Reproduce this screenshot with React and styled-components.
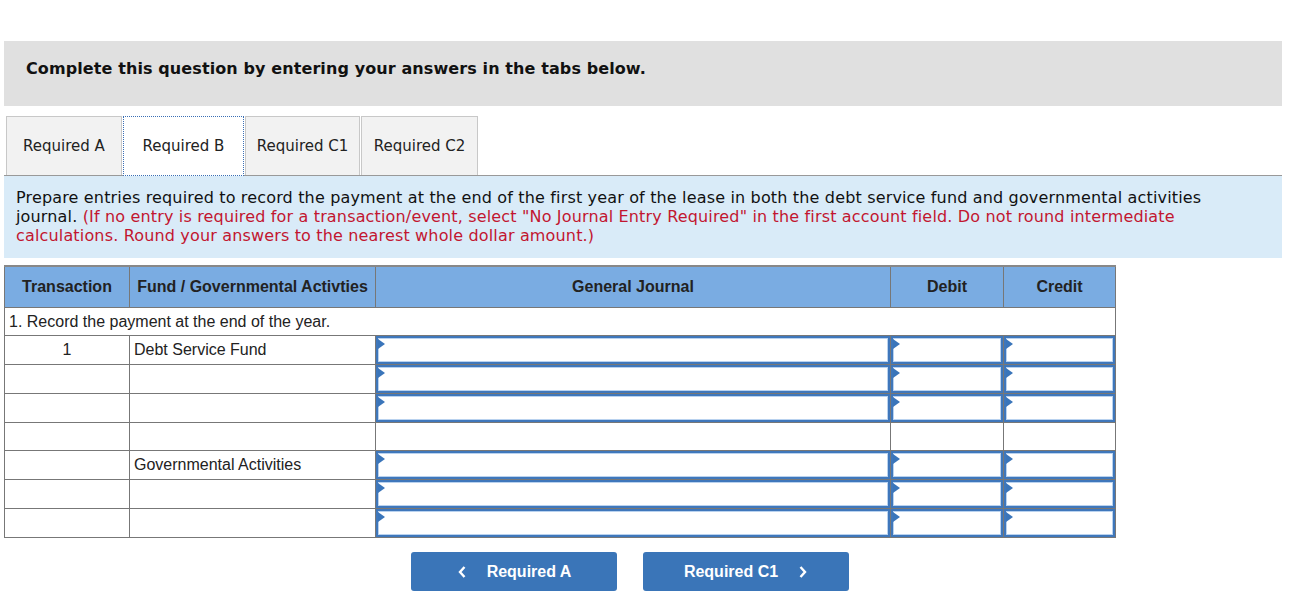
import React from "react";
import styled, { createGlobalStyle } from "styled-components";

const Global = createGlobalStyle`
  html, body { margin: 0; padding: 0; background: #fff; }
  body { font-family: "DejaVu Sans", Verdana, sans-serif; color: #111; }
`;

const Page = styled.div`
  padding: 41px 26px 0 4px;
  width: 1278px;
`;

const Banner = styled.div`
  background: #e0e0e0;
  height: 65px;
  box-sizing: border-box;
  display: flex;
  align-items: center;
  padding: 0 0 10px 22px;
  font-weight: bold;
  font-size: 16px;
  letter-spacing: 0.1px;
  color: #111;
`;

const Tabs = styled.div`
  display: flex;
  gap: 1px;
  margin-top: 10px;
  padding-left: 2px;
  height: 59px;
`;

const Tab = styled.div`
  display: flex;
  align-items: center;
  justify-content: center;
  width: ${(p) => p.$w}px;
  font-size: 15px;
  color: #222;
  background: ${(p) => (p.$active ? "#fff" : "#f2f2f2")};
  border: ${(p) => (p.$active ? "1px dotted #3a6fb5" : "1px solid #c8c8c8")};
  border-bottom: ${(p) => (p.$active ? "1px dotted #3a6fb5" : "none")};
  box-sizing: border-box;
  height: ${(p) => (p.$active ? 60 : 59)}px;
  position: relative;
  z-index: ${(p) => (p.$active ? 1 : 0)};
`;

const Panel = styled.div`
  background: #d9ebf8;
  border-top: 1px solid #999;
  padding: 12px 65px 12px 12px;
  font-size: 16px;
  letter-spacing: 0.16px;
  line-height: 19px;
  color: #111;
  height: 83px;
  box-sizing: border-box;
`;

const Red = styled.span`
  color: #c21630;
`;

const Table = styled.table`
  margin-top: 7px;
  border-collapse: collapse;
  width: 1112px;
  table-layout: fixed;
  font-family: "Liberation Sans", Arial, sans-serif;
  font-size: 16px;
  color: #222;
  border: 1px solid #777;
  border-top: 2px solid #888;
`;

const Th = styled.th`
  background: #7aace2;
  height: 40px;
  border: 1px solid #777;
  font-weight: bold;
  font-size: 16px;
  color: #222;
  padding: 0;
  text-align: center;
`;

const Td = styled.td`
  border: 1px solid #777;
  height: 27px;
  padding: 0 ${(p) => (p.$pad ? 4 : 0)}px;
  text-align: ${(p) => p.$align || "left"};
  vertical-align: middle;
  line-height: 18px;
`;

const InputCell = styled.td`
  border: 1px solid #777;
  height: 27px;
  padding: 0;
`;

const Field = styled.div`
  position: relative;
  box-sizing: border-box;
  height: 28px;
  border: 2px solid #3f77bb;
  box-shadow: inset 0 0 0 1px #b9d2ef;
  background: #fff;
  &::before {
    content: "";
    position: absolute;
    left: 0;
    top: 1px;
    border-left: 7px solid #3a75ba;
    border-top: 5px solid transparent;
    border-bottom: 5px solid transparent;
  }
`;

const Buttons = styled.div`
  display: flex;
  gap: 26px;
  margin-top: 14px;
  padding-left: 407px;
`;

const NavButton = styled.button`
  width: 206px;
  height: 39px;
  background: #3a75b8;
  color: #fff;
  border: none;
  border-radius: 3px;
  font-family: "Liberation Sans", Arial, sans-serif;
  font-weight: bold;
  font-size: 16px;
  display: flex;
  align-items: center;
  justify-content: center;
  gap: 20px;
  padding: 0;
`;

const Chevron = ({ dir }) => (
  <svg width="10" height="14" viewBox="0 0 10 14">
    <path
      d={dir === "left" ? "M7.5 2 L3 7 L7.5 12" : "M2.5 2 L7 7 L2.5 12"}
      fill="none"
      stroke="#fff"
      strokeWidth="2.4"
    />
  </svg>
);

const rows = [
  { t: "1", f: "Debt Service Fund", inputs: true },
  { t: "", f: "", inputs: true },
  { t: "", f: "", inputs: true },
  { t: "", f: "", inputs: false },
  { t: "", f: "Governmental Activities", inputs: true },
  { t: "", f: "", inputs: true },
  { t: "", f: "", inputs: true },
];

export default function App() {
  return (
    <Page>
      <Global />
      <Banner>Complete this question by entering your answers in the tabs below.</Banner>
      <Tabs>
        <Tab $w={116}>Required A</Tab>
        <Tab $w={121} $active>Required B</Tab>
        <Tab $w={115}>Required C1</Tab>
        <Tab $w={117}>Required C2</Tab>
      </Tabs>
      <Panel>
        Prepare entries required to record the payment at the end of the first year of the lease in both the debt service fund and governmental activities journal.{" "}
        <Red>
          (If no entry is required for a transaction/event, select "No Journal Entry Required" in the first account field. Do not round intermediate calculations. Round your answers to the nearest whole dollar amount.)
        </Red>
      </Panel>
      <Table>
        <colgroup>
          <col style={{ width: 125 }} />
          <col style={{ width: 246 }} />
          <col style={{ width: 515 }} />
          <col style={{ width: 113 }} />
          <col style={{ width: 112 }} />
        </colgroup>
        <thead>
          <tr>
            <Th>Transaction</Th>
            <Th>Fund / Governmental Activties</Th>
            <Th>General Journal</Th>
            <Th>Debit</Th>
            <Th>Credit</Th>
          </tr>
        </thead>
        <tbody>
          <tr>
            <Td $pad colSpan={5}>1. Record the payment at the end of the year.</Td>
          </tr>
          {rows.map((r, i) => (
            <tr key={i}>
              <Td $align="center">{r.t}</Td>
              <Td $pad>{r.f}</Td>
              {r.inputs ? (
                <>
                  <InputCell><Field /></InputCell>
                  <InputCell><Field /></InputCell>
                  <InputCell><Field /></InputCell>
                </>
              ) : (
                <>
                  <Td />
                  <Td />
                  <Td />
                </>
              )}
            </tr>
          ))}
        </tbody>
      </Table>
      <Buttons>
        <NavButton>
          <Chevron dir="left" />
          Required A
        </NavButton>
        <NavButton>
          Required C1
          <Chevron dir="right" />
        </NavButton>
      </Buttons>
    </Page>
  );
}
